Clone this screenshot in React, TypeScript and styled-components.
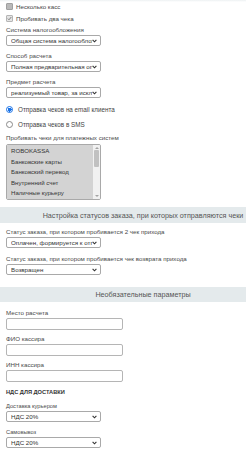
import React from "react";
import styled, { createGlobalStyle } from "styled-components";

const Global = createGlobalStyle`
  html, body { margin: 0; padding: 0; background: #fff; }
  body { font-family: "Liberation Sans", Arial, sans-serif; color: #444; }
`;

const Page = styled.div`
  width: 246px;
  height: 450px;
  overflow: hidden;
  background: linear-gradient(#edf1f2 0, #fff 2px);
`;

const Inner = styled.div`
  padding: 0 0 0 6px;
  display: flex;
  flex-direction: column;
  align-items: flex-start;
`;

const CheckRow = styled.div`
  height: 12px;
  display: flex;
  align-items: center;
  gap: 3px;
  font-size: 6.2px;
  color: #444;
  white-space: nowrap;
`;

const Box = styled.span<{ $checked?: boolean }>`
  width: 7px;
  height: 7px;
  box-sizing: border-box;
  border-radius: 1px;
  border: 1px solid ${(p) => (p.$checked ? "#b5b5b5" : "#a0a0a0")};
  background: ${(p) => (p.$checked ? "#e4e4e4" : "#b9b9b9")};
  display: flex;
  align-items: center;
  justify-content: center;
`;

const Label = styled.div<{ $mt?: number; $size?: number }>`
  margin-top: ${(p) => p.$mt ?? 0}px;
  height: 8px;
  line-height: 8px;
  font-size: ${(p) => p.$size ?? 6.2}px;
  color: #4a4a4a;
  white-space: nowrap;
`;

const SelectBox = styled.div<{ $mt?: number }>`
  margin-top: ${(p) => p.$mt ?? 1}px;
  width: 95px;
  height: 11px;
  box-sizing: border-box;
  border: 1px solid #a9a9a9;
  border-radius: 2px;
  background: #fff;
  display: flex;
  align-items: center;
  padding: 0 3px 0 4px;
  font-size: 6.2px;
  color: #333;
  white-space: nowrap;
`;

const SelectText = styled.span`
  flex: 1;
  overflow: hidden;
  text-overflow: clip;
`;

const RadioRow = styled.div<{ $mt?: number }>`
  margin-top: ${(p) => p.$mt ?? 0}px;
  height: 15px;
  display: flex;
  align-items: center;
  gap: 5px;
  font-size: 6.3px;
  color: #444;
  white-space: nowrap;
`;

const Radio = styled.span<{ $checked?: boolean }>`
  width: 7px;
  height: 7px;
  box-sizing: border-box;
  border-radius: 50%;
  border: 1px solid ${(p) => (p.$checked ? "#1a73e8" : "#8a8a8a")};
  background: ${(p) => (p.$checked ? "radial-gradient(circle, #1a73e8 0 2px, #fff 2px)" : "#fff")};
`;

const ListBox = styled.div`
  margin-top: 2px;
  width: 95px;
  height: 56px;
  box-sizing: border-box;
  border: 1px solid #a9a9a9;
  border-radius: 2px;
  background: #fff;
  display: flex;
  overflow: hidden;
`;

const ListItems = styled.div`
  flex: 1;
  background: #d3d3d3;
  display: flex;
  flex-direction: column;
  padding-top: 1px;
`;

const ListItem = styled.div`
  height: 10.6px;
  line-height: 10.6px;
  padding-left: 4px;
  font-size: 6.1px;
  color: #333;
  white-space: nowrap;
`;

const Scrollbar = styled.div`
  width: 7px;
  background: #f1f1f1;
  display: flex;
  flex-direction: column;
  align-items: center;
  padding: 2px 0;
  box-sizing: border-box;
`;

const Thumb = styled.div`
  width: 5px;
  height: 17px;
  background: #c1c1c1;
  border-radius: 1px;
  margin-top: 1px;
  flex: none;
`;

const Track = styled.div`
  flex: 1;
`;

const Arrow = styled.span<{ $down?: boolean }>`
  width: 0;
  height: 0;
  border-left: 2px solid transparent;
  border-right: 2px solid transparent;
  ${(p) => (p.$down ? "border-top: 2px solid #a3a3a3;" : "border-bottom: 2px solid #a3a3a3;")}
`;

const Section = styled.div<{ $mt: number; $h: number }>`
  margin-top: ${(p) => p.$mt}px;
  height: ${(p) => p.$h}px;
  width: 246px;
  background: #e4eaec;
  display: flex;
  align-items: center;
  justify-content: center;
  padding-left: 40px;
  box-sizing: border-box;
  font-size: 7.2px;
  color: #555;
  white-space: nowrap;
  margin-left: -6px;
`;

const TextInput = styled.div`
  margin-top: 1px;
  width: 117px;
  height: 12px;
  box-sizing: border-box;
  border: 1px solid #b5b5b5;
  border-radius: 2px;
  background: #fff;
`;

const Heading = styled.div<{ $mt: number }>`
  margin-top: ${(p) => p.$mt}px;
  height: 8px;
  line-height: 8px;
  font-size: 5.7px;
  font-weight: bold;
  color: #333;
  white-space: nowrap;
`;

const Chevron = () => (
  <svg width="5" height="4" viewBox="0 0 5 4">
    <path d="M0.6 0.8 L2.5 2.8 L4.4 0.8" fill="none" stroke="#333" strokeWidth="1.1" />
  </svg>
);

const Select = ({ value, mt }: { value: string; mt?: number }) => (
  <SelectBox $mt={mt}>
    <SelectText>{value}</SelectText>
    <Chevron />
  </SelectBox>
);

const Check = () => (
  <svg width="5" height="5" viewBox="0 0 5 5">
    <path d="M0.8 2.6 L2 3.8 L4.3 1" fill="none" stroke="#777" strokeWidth="0.9" />
  </svg>
);

export default function App() {
  return (
    <Page>
      <Global />
      <Inner>
        <CheckRow>
          <Box />
          Несколько касс
        </CheckRow>
        <CheckRow>
          <Box $checked>
            <Check />
          </Box>
          Пробивать два чека
        </CheckRow>

        <Label $mt={2}>Система налогообложения</Label>
        <Select value="Общая система налогообложения" />
        <Label $mt={6}>Способ расчета</Label>
        <Select value="Полная предварительная оплата" />
        <Label $mt={6}>Предмет расчета</Label>
        <Select value="реализуемый товар, за исключением" />

        <RadioRow $mt={4}>
          <Radio $checked />
          Отправка чеков на email клиента
        </RadioRow>
        <RadioRow>
          <Radio />
          Отправка чеков в SMS
        </RadioRow>

        <Label $mt={2}>Пробивать чеки для платежных систем</Label>
        <ListBox>
          <ListItems>
            <ListItem>ROBOKASSA</ListItem>
            <ListItem>Банковские карты</ListItem>
            <ListItem>Банковский перевод</ListItem>
            <ListItem>Внутренний счет</ListItem>
            <ListItem>Наличные курьеру</ListItem>
          </ListItems>
          <Scrollbar>
            <Arrow />
            <Thumb />
            <Track />
            <Arrow $down />
          </Scrollbar>
        </ListBox>

        <Section $mt={7} $h={16}>
          Настройка статусов заказа, при которых отправляются чеки
        </Section>

        <Label $mt={5}>Статус заказа, при котором пробивается 2 чек прихода</Label>
        <Select value="Оплачен, формируется к отправке" />
        <Label $mt={7}>Статус заказа, при котором пробивается чек возврата прихода</Label>
        <Select value="Возвращен" />

        <Section $mt={12} $h={15}>
          Необязательные параметры
        </Section>

        <Label $mt={7}>Место расчета</Label>
        <TextInput />
        <Label $mt={5}>ФИО кассира</Label>
        <TextInput />
        <Label $mt={5}>ИНН кассира</Label>
        <TextInput />

        <Heading $mt={6}>НДС ДЛЯ ДОСТАВКИ</Heading>
        <Label $mt={6} $size={5.7}>Доставка курьером</Label>
        <Select value="НДС 20%" />
        <Label $mt={6} $size={5.7}>Самовывоз</Label>
        <Select value="НДС 20%" />
      </Inner>
    </Page>
  );
}
